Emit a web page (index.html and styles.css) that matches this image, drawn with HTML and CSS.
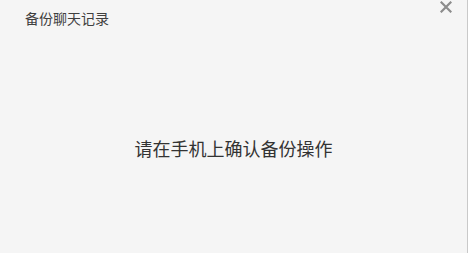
FILE: index.html
```html
<!DOCTYPE html>
<html lang="zh-CN">
<head>
<meta charset="utf-8">
<title>备份聊天记录</title>
<link rel="stylesheet" href="styles.css">
</head>
<body>
<div class="dialog">
  <div class="header">
    <div class="title">备份聊天记录</div>
    <button class="close" aria-label="关闭">
      <svg width="12" height="12" viewBox="0 0 12 12"><path d="M1.5 1.5 L10.5 10.5 M10.5 1.5 L1.5 10.5" stroke="#8c8c8c" stroke-width="2.2" stroke-linecap="square"/></svg>
    </button>
  </div>
  <div class="message">请在手机上确认备份操作</div>
</div>
</body>
</html>
```
FILE: styles.css
```css
html, body {
  margin: 0;
  padding: 0;
  background: #f5f5f5;
}
.dialog {
  width: 467px;
  height: 253px;
  border-right: 1px solid #c9c9c9;
  background: #f5f5f5;
  font-family: "Noto Sans CJK SC", "Microsoft YaHei", sans-serif;
  display: flex;
  flex-direction: column;
}
.header {
  height: 36px;
  display: flex;
  justify-content: space-between;
  align-items: flex-start;
  padding: 0 15px 0 25px;
}
.title {
  font-size: 14px;
  line-height: 36px;
  color: #404040;
}
.close {
  margin-top: 1px;
  padding: 0;
  border: 0;
  background: none;
  width: 12px;
  height: 12px;
  display: flex;
}
.message {
  margin-top: 100px;
  text-align: center;
  font-size: 18px;
  line-height: 24px;
  color: #333333;
}
```
